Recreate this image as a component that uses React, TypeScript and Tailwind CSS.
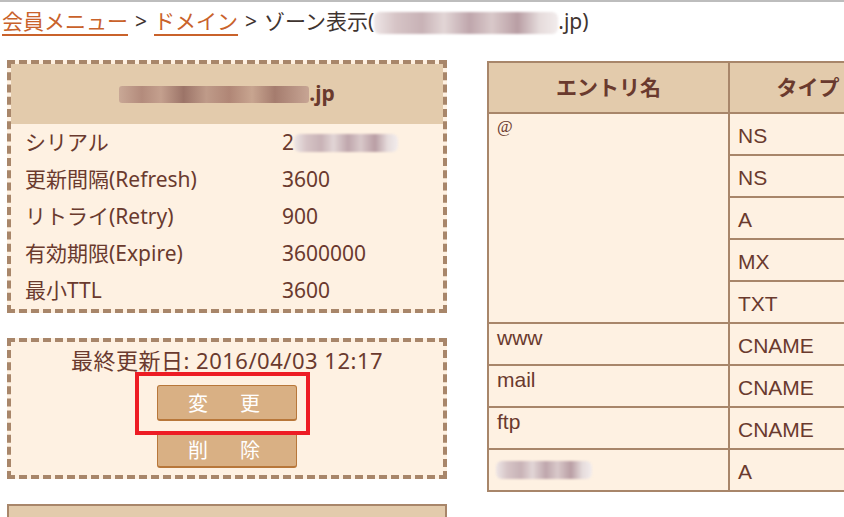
import React from "react";

const line = "border-[#a8866a]";

// pixelated stand-in for the redacted parts of the screenshot
const Mosaic = ({ w, h, tone }: { w: number; h: number; tone: "light" | "dark" }) => (
  <span
    className={
      tone === "dark"
        ? "inline-block align-middle rounded-[3px] blur-[0.6px] bg-[linear-gradient(90deg,#c9a896,#b38b7c_12%,#c4a08e_22%,#9c7468_34%,#bf9b89_46%,#b08676_58%,#c8a590_70%,#a57c6e_82%,#c7a594)]"
        : "inline-block align-middle rounded-[6px] blur-[0.8px] bg-[linear-gradient(90deg,#eee6e6,#d6c4c6_12%,#c8b2b6_26%,#e2d6d6_38%,#bfa6ac_52%,#d9c9ca_64%,#b99ea4_78%,#e6dcdc_90%,#f2ecec)]"
    }
    style={{ width: w, height: h }}
  />
);

const soaRows = [
  { label: "シリアル", value: null },
  { label: "更新間隔(Refresh)", value: "3600" },
  { label: "リトライ(Retry)", value: "900" },
  { label: "有効期限(Expire)", value: "3600000" },
  { label: "最小TTL", value: "3600" },
];

const records = [
  { name: "www", type: "CNAME" },
  { name: "mail", type: "CNAME" },
  { name: "ftp", type: "CNAME" },
];

const Btn = ({ label }: { label: string }) => (
  <button className="w-[140px] h-[36px] rounded-[3px] border border-[#b8773a] border-b-2 bg-[#d9b084] text-white text-[20px] leading-none tracking-[6px] font-['Noto_Sans_CJK_JP',sans-serif]">
    {label}
  </button>
);

export default function App() {
  return (
    <div className="w-[844px] h-[517px] overflow-hidden bg-white border-t-2 border-[#bdbdbd] text-[#6a3a2e] font-['Noto_Sans','Noto_Sans_CJK_JP',sans-serif]">
      {/* breadcrumb */}
      <div className="h-[36px] pl-[2px] pt-[5px] text-[21px] leading-[28px] whitespace-nowrap text-[#3f3430]">
        <a className="text-[#c9622b] underline underline-offset-[5px] decoration-[2px]">会員メニュー</a>
        <span className="mx-[7px]">&gt;</span>
        <a className="text-[#c9622b] underline underline-offset-[5px] decoration-[2px]">ドメイン</a>
        <span className="mx-[7px]">&gt;</span>
        ゾーン表示(
        <Mosaic w={184} h={22} tone="light" />
        .jp)
      </div>

      <div className="mt-[22px] pl-[7px] flex items-start gap-[40px]">
        {/* left column */}
        <div className="w-[440px] shrink-0 flex flex-col gap-[25px]">
          <div className={`h-[253px] border-4 border-dashed ${line} bg-[#fef1e2]`}>
            <div className="h-[60px] bg-[#e3cbac] flex items-center justify-center text-[21px] font-bold">
              <Mosaic w={190} h={17} tone="dark" />
              .jp
            </div>
            {soaRows.map((r) => (
              <div key={r.label} className="h-[37px] pl-[14px] flex items-center text-[21px]">
                <span className="w-[257px]">{r.label}</span>
                {r.value ?? (
                  <span className="flex items-center">
                    2<Mosaic w={104} h={18} tone="light" />
                  </span>
                )}
              </div>
            ))}
          </div>

          <div className={`relative h-[141px] border-4 border-dashed ${line} bg-[#fef1e2] pt-[4px] flex flex-col items-center`}>
            <div className="text-[22px] leading-[28px] tracking-[0.5px]">最終更新日: 2016/04/03 12:17</div>
            <div className="mt-[11px] flex flex-col gap-[11px]">
              <Btn label="変　更" />
              <Btn label="削　除" />
            </div>
            <div className="absolute left-[124px] top-[30px] w-[175px] h-[63px] border-4 border-[#ed1c24]" />
          </div>

          <div className={`h-[40px] border-2 ${line} bg-[#e3cbac]`} />
        </div>

        {/* zone table */}
        <div className="mt-[1px] shrink-0 grid grid-cols-[239px_156px] gap-[2px] p-[2px] bg-[#a8866a] text-[21px] font-['Liberation_Sans','Noto_Sans_CJK_JP',sans-serif]">
          <div className="h-[49px] bg-[#e3cbac] flex items-center justify-center font-bold">エントリ名</div>
          <div className="h-[49px] bg-[#e3cbac] flex items-center justify-center font-bold">タイプ</div>

          <div className="row-span-5 bg-[#fef1e2] pl-[8px] pt-[3px] text-[17px] leading-[20px] font-['Liberation_Serif',serif]">@</div>
          {["NS", "NS", "A", "MX", "TXT"].map((t, i) => (
            <div key={i} className="h-[40px] bg-[#fef1e2] pl-[8px] pt-[4px] flex items-center">{t}</div>
          ))}

          {records.map((r) => (
            <React.Fragment key={r.name}>
              <div className="h-[40px] bg-[#fef1e2] pl-[8px] pt-[2px] leading-[24px]">{r.name}</div>
              <div className="h-[40px] bg-[#fef1e2] pl-[8px] pt-[4px] flex items-center">{r.type}</div>
            </React.Fragment>
          ))}

          <div className="h-[40px] bg-[#fef1e2] pl-[7px] pt-[3px]">
            <span className="block">
              <Mosaic w={96} h={18} tone="light" />
            </span>
          </div>
          <div className="h-[40px] bg-[#fef1e2] pl-[8px] pt-[4px] flex items-center">A</div>
        </div>
      </div>
    </div>
  );
}
